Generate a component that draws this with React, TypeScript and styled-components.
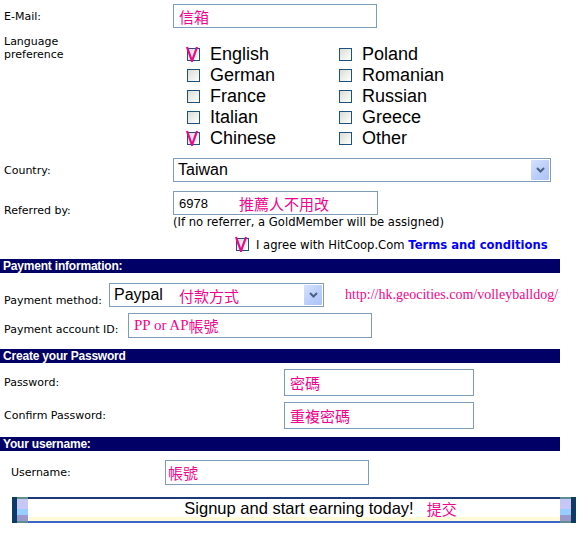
import React from 'react';
import styled, { createGlobalStyle } from 'styled-components';

const GlobalStyle = createGlobalStyle`
  body {
    margin: 0;
    background: #ffffff;
    font-family: "DejaVu Sans", Verdana, sans-serif;
    font-size: 11px;
    color: #000000;
  }
`;

const PINK = '#f0068c';

const Form = styled.div`
  display: flex;
  flex-direction: column;
  width: 582px;
`;

const Row = styled.div<{ $mt: number; $align?: string; $pad?: number }>`
  display: flex;
  align-items: ${(p) => p.$align || 'center'};
  margin-top: ${(p) => p.$mt}px;
  padding-left: ${(p) => p.$pad ?? 4}px;
`;

const Label = styled.div<{ $w: number }>`
  width: ${(p) => p.$w}px;
  flex-shrink: 0;
  line-height: 13px;
`;

const Field = styled.div<{ $w: number; $h: number }>`
  box-sizing: border-box;
  width: ${(p) => p.$w}px;
  height: ${(p) => p.$h}px;
  border: 1px solid #7f9db9;
  background: #ffffff;
  display: flex;
  align-items: center;
  padding-left: 5px;
  white-space: nowrap;
`;

const Cjk = styled.span<{ $ml?: number }>`
  font-family: "Noto Sans CJK TC", "Noto Sans CJK SC", sans-serif;
  font-size: 15px;
  color: ${PINK};
  margin-left: ${(p) => p.$ml ?? 0}px;
`;

const SerifPink = styled.span<{ $size: number }>`
  font-family: "Liberation Serif", "Noto Sans CJK TC", serif;
  font-size: ${(p) => p.$size}px;
  color: ${PINK};
  white-space: nowrap;
`;

const SansValue = styled.span<{ $size: number }>`
  font-family: "Liberation Sans", Arial, sans-serif;
  font-size: ${(p) => p.$size}px;
  color: #000000;
`;

const Select = styled.div<{ $w: number }>`
  box-sizing: border-box;
  width: ${(p) => p.$w}px;
  height: 24px;
  border: 1px solid #7f9db9;
  background: #ffffff;
  display: flex;
  align-items: center;
  padding: 1px;
`;

const SelectText = styled.div`
  flex: 1;
  padding-left: 3px;
  display: flex;
  align-items: center;
  white-space: nowrap;
`;

const Arrow = styled.div`
  width: 18px;
  height: 20px;
  border-radius: 1px;
  background: linear-gradient(135deg, #d6e2fd 0%, #b9cdfa 60%, #aec4f6 100%);
  display: flex;
  align-items: center;
  justify-content: center;
`;

const Stack = styled.div`
  display: flex;
  flex-direction: column;
`;

const LangGrid = styled.div`
  display: grid;
  grid-template-columns: 152px 152px;
  grid-auto-rows: 21px;
  margin-top: 12px;
  padding-left: 14px;
`;

const LangItem = styled.div`
  display: flex;
  align-items: center;
  gap: 10px;
  font-family: "Liberation Sans", Arial, sans-serif;
  font-size: 18px;
`;

const Box = styled.span`
  position: relative;
  box-sizing: border-box;
  width: 13px;
  height: 13px;
  flex-shrink: 0;
  border: 1px solid #1c5180;
  background: linear-gradient(135deg, #dcdcd7 0%, #f4f4f0 70%, #ffffff 100%);
`;

const Tick = styled.svg`
  position: absolute;
  left: -2px;
  top: -3px;
`;

const Note = styled.div`
  font-size: 11.6px;
  line-height: 14px;
  white-space: nowrap;
`;

const Agree = styled.div`
  display: flex;
  align-items: center;
  gap: 7px;
  height: 17px;
  margin-top: 7px;
  padding-left: 63px;
  font-size: 11.6px;
  white-space: nowrap;
`;

const Terms = styled.span`
  font-weight: bold;
  color: #0000ff;
`;

const Header = styled.div<{ $mt: number }>`
  margin-top: ${(p) => p.$mt}px;
  width: 560px;
  height: 14px;
  background: #000066;
  color: #ffffff;
  font-family: "Liberation Sans", Arial, sans-serif;
  font-weight: bold;
  font-size: 12px;
  line-height: 14px;
  padding-left: 3px;
  box-sizing: border-box;
  letter-spacing: -0.2px;
`;

const Url = styled.div`
  align-self: center;
  margin-left: 21px;
`;

const SubmitBar = styled.div`
  display: flex;
  height: 26px;
  margin: 12px 0 0 12px;
  width: 564px;
`;

const Cap = styled.div<{ $side: 'left' | 'right' }>`
  width: 16px;
  box-sizing: border-box;
  ${(p) => (p.$side === 'left' ? 'border-left' : 'border-right')}: 5px solid #0d3b66;
  background: linear-gradient(
    to bottom,
    #5e8f90 0,
    #5e8f90 2px,
    #c8c8f8 2px,
    #c8c8f8 45%,
    #99ccff 45%,
    #99ccff 68%,
    #9a98cc 68%,
    #9a98cc calc(100% - 2px),
    #5e8f90 calc(100% - 2px)
  );
`;

const Face = styled.div`
  flex: 1;
  box-sizing: border-box;
  border-top: 2px solid #1a3a7c;
  border-bottom: 2px solid #3a66cc;
  background: linear-gradient(to bottom, #ffffff 0, #ffffff 80%, #fffbd8 80%);
  display: flex;
  align-items: center;
  justify-content: center;
  padding-left: 10px;
  padding-bottom: 3px;
`;

const SubmitText = styled.span`
  position: relative;
  font-family: "Liberation Sans", Arial, sans-serif;
  font-size: 16.5px;
  color: #000000;
`;

const SubmitNote = styled(Cjk)`
  position: absolute;
  left: calc(100% + 13px);
  top: -1px;
  white-space: nowrap;
`;

const Check: React.FC<{ on?: boolean }> = ({ on }) => (
  <Box>
    {on && (
      <Tick width="12" height="16" viewBox="0 0 12 16">
        <polyline points="1,1 6,15 11,1" fill="none" stroke={PINK} strokeWidth="2.2" />
      </Tick>
    )}
  </Box>
);

const Chevron = () => (
  <svg width="9" height="6" viewBox="0 0 9 6">
    <polyline points="1,1 4.5,4.5 8,1" fill="none" stroke="#4d6185" strokeWidth="2" />
  </svg>
);

const languages: [string, boolean][] = [
  ['English', true],
  ['Poland', false],
  ['German', false],
  ['Romanian', false],
  ['France', false],
  ['Russian', false],
  ['Italian', false],
  ['Greece', false],
  ['Chinese', true],
  ['Other', false],
];

const App: React.FC = () => {
  return (
    <Form>
      <GlobalStyle />
      <Row $mt={4}>
        <Label $w={169}>E-Mail:</Label>
        <Field $w={204} $h={24}>
          <Cjk>信箱</Cjk>
        </Field>
      </Row>

      <Row $mt={4} $align="flex-start">
        <Label $w={169} style={{ paddingTop: 3 }}>
          Language
          <br />
          preference
        </Label>
        <LangGrid>
          {languages.map(([name, on]) => (
            <LangItem key={name}>
              <Check on={on} />
              {name}
            </LangItem>
          ))}
        </LangGrid>
      </Row>

      <Row $mt={9}>
        <Label $w={169}>Country:</Label>
        <Select $w={378}>
          <SelectText>
            <SansValue $size={16}>Taiwan</SansValue>
          </SelectText>
          <Arrow>
            <Chevron />
          </Arrow>
        </Select>
      </Row>

      <Row $mt={9}>
        <Label $w={169}>Referred by:</Label>
        <Stack>
          <Field $w={205} $h={24}>
            <SansValue $size={13}>6978</SansValue>
            <Cjk $ml={31}>推薦人不用改</Cjk>
          </Field>
          <Note>(If no referrer, a GoldMember will be assigned)</Note>
        </Stack>
      </Row>

      <Row $mt={0} $pad={173}>
        <Agree>
          <Check on />
          <span>
            I agree with HitCoop.Com <Terms>Terms and conditions</Terms>
          </span>
        </Agree>
      </Row>

      <Header $mt={6}>Payment information:</Header>

      <Row $mt={10} $align="flex-end">
        <Label $w={105}>Payment method:</Label>
        <Select $w={215}>
          <SelectText>
            <SansValue $size={16}>Paypal</SansValue>
            <Cjk $ml={16}>付款方式</Cjk>
          </SelectText>
          <Arrow>
            <Chevron />
          </Arrow>
        </Select>
        <Url>
          <SerifPink $size={14}>http://hk.geocities.com/volleyballdog/</SerifPink>
        </Url>
      </Row>

      <Row $mt={6} $align="flex-end">
        <Label $w={124} style={{ paddingBottom: 2 }}>Payment account ID:</Label>
        <Field $w={244} $h={25}>
          <SerifPink $size={15}>PP or AP</SerifPink>
          <Cjk>帳號</Cjk>
        </Field>
      </Row>

      <Header $mt={11}>Create your Password</Header>

      <Row $mt={6}>
        <Label $w={280}>Password:</Label>
        <Field $w={190} $h={27}>
          <Cjk>密碼</Cjk>
        </Field>
      </Row>

      <Row $mt={6}>
        <Label $w={280}>Confirm Password:</Label>
        <Field $w={190} $h={27}>
          <Cjk>重複密碼</Cjk>
        </Field>
      </Row>

      <Header $mt={8}>Your username:</Header>

      <Row $mt={9} $pad={11}>
        <Label $w={154}>Username:</Label>
        <Field $w={204} $h={25}>
          <Cjk $ml={-3}>帳號</Cjk>
        </Field>
      </Row>

      <SubmitBar>
        <Cap $side="left" />
        <Face>
          <SubmitText>
            Signup and start earning today!
            <SubmitNote>提交</SubmitNote>
          </SubmitText>
        </Face>
        <Cap $side="right" />
      </SubmitBar>
    </Form>
  );
};

export default App;
